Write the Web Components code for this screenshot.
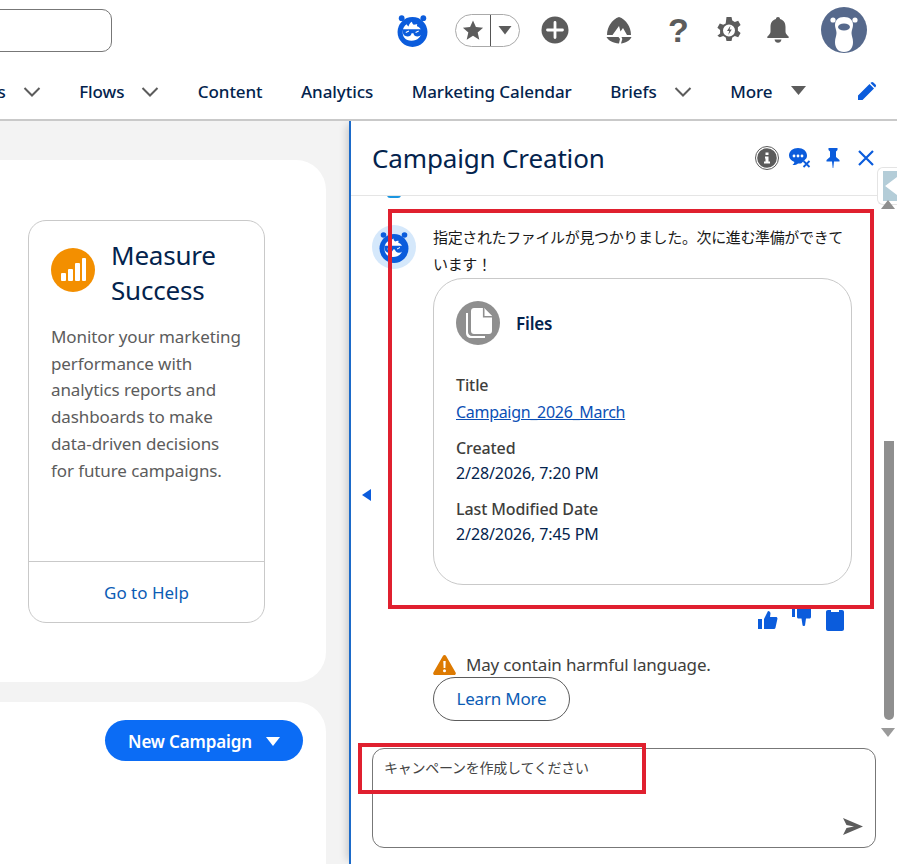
<!DOCTYPE html>
<html lang="en"><head><meta charset="utf-8"><title>Campaign Creation</title>
<style>
html,body{margin:0;padding:0;height:100%;overflow:hidden;background:#fff}
body{font-family:"Noto Sans","Noto Sans CJK JP",sans-serif;color:#03234d}
</style></head><body>
<app-shell>
  <top-bar slot="top"></top-bar>
  <nav-bar slot="top"></nav-bar>
  <home-pane slot="left"></home-pane>
  <campaign-panel slot="right"></campaign-panel>
  <note-box style="left:388px;top:209px;width:486px;height:400px"></note-box>
  <note-box style="left:358px;top:743px;width:288px;height:51px"></note-box>
</app-shell>
<script>
const def=(name,html)=>customElements.define(name,class extends HTMLElement{
  constructor(){super();this.attachShadow({mode:'open'}).innerHTML=html}
});
const BOT=`<svg viewBox="0 0 32 32" width="100%" height="100%" style="display:block"><circle cx="5.500" cy="4" r="2.800" fill="currentColor"/><circle cx="26.500" cy="4" r="2.800" fill="currentColor"/><circle cx="16" cy="17.500" r="14.500" fill="currentColor"/><path d="M6.500 17C6.500 13.500 8.500 11 10.500 10c.3 1 .8 1.600 1.700 2 .3-2 1.500-3.500 3.300-4.500.1 1.300.7 2.400 1.800 3 1-.6 2.300-.8 3.400-.6-.4.700-.5 1.300-.3 1.900 2.300.8 4.100 2.700 4.100 5.200.3 5-3.500 9-9.500 9S6.200 22 6.500 17z" fill="#fff"/><path d="M6.500 14.800h19v2.200c0 3-1.900 4.800-4.600 4.800-2.300 0-3.600-1.200-4-3.200h-1.800c-.4 2-1.700 3.200-4 3.200-2.700 0-4.600-1.800-4.600-4.800z" fill="currentColor"/><path d="M9.500 18l3-1.500M19 18l3-1.500" stroke="#fff" stroke-width="1"/></svg>`;

def('app-shell',`<style>
:host{display:grid;grid-template-columns:349px 548px;grid-template-rows:121px 743px;width:897px;height:864px;overflow:hidden;position:relative}
.top{grid-column:1/3;display:block;background:#fff;position:relative;z-index:2;min-width:0}
</style><div class="top"><slot name="top"></slot></div><slot name="left"></slot><slot name="right"></slot><slot></slot>`);

def('top-bar',`<style>
:host{display:flex;height:60px;box-sizing:border-box;padding:0 30px 0 0;align-items:center;justify-content:flex-end;overflow:hidden;color:#5c5c5c}
:host>*{flex:none}
.search{width:180px;height:43px;box-sizing:border-box;border:1px solid #777;border-radius:10px;margin:0 284px 0 0}
.bot{width:33px;height:35px;color:#0b5cdc;margin-right:26px}
.fav{display:flex;width:65px;height:33px;box-sizing:border-box;border:1px solid #aaa;border-radius:17px;margin-right:21px;align-items:stretch;overflow:hidden}
.fav>span{display:flex;align-items:center;justify-content:center}
.fav .a{width:34px;flex:none;border-right:1px solid #555}
.fav .b{flex:1}
svg{display:block;flex:none}
</style>
<div class="search"></div>
<div class="bot">${BOT}</div>
<div class="fav"><span class="a"><svg width="22" height="22" viewBox="0 0 24 24" fill="#5c5c5c"><path d="M12 1.500l3.200 7.300 7.800.7-5.900 5.200 1.800 7.800L12 18.400l-6.900 4.100 1.800-7.800L1 9.500l7.800-.7z"/></svg></span><span class="b"><svg width="14" height="9" viewBox="0 0 14 9" fill="#5c5c5c"><path d="M.5 0h13L7 8.500z"/></svg></span></div>
<svg style="margin-right:36px" width="28" height="28" viewBox="0 0 28 28"><circle cx="14" cy="14" r="13.500" fill="#5c5c5c"/><path d="M14 6.500v15M6.500 14h15" stroke="#fff" stroke-width="2.800" stroke-linecap="round"/></svg>
<svg style="margin-right:35px" width="28" height="28" viewBox="0 0 28 28" fill="#5c5c5c"><path d="M14 1c3.500 1 6.500 3.500 9 7.500 1.500 2.500 3 6 3 10.500h-4l-4-7-2.500 3.500L14 10 7.500 19H2c0-4.500 1.500-8 3-10.500C7.500 4.500 10.500 2 14 1z"/><path d="M1.500 21h12l1.500 2-1 4.500C8 27 4 25 1.500 21zM16.500 21h10c-2 4-6 6-10.500 6.500l1.300-4.500z"/></svg>
<div style="margin-right:29px;font:700 34px/34px 'Liberation Sans',sans-serif;width:19px;text-align:center">?</div>
<svg style="margin-right:23px" width="26" height="28" viewBox="0 0 26 28" fill="#5c5c5c"><path fill-rule="evenodd" d="M10.500 1h5l.8 3.600 2.500 1.300 3.400-1.200 2.400 4.300-2.700 2.300v3.400l2.700 2.300-2.400 4.300-3.400-1.200-2.500 1.300-.8 3.600h-5l-.8-3.600-2.500-1.300-3.400 1.200L1.400 19.800l2.700-2.300v-3.400L1.400 11.800l2.400-4.300 3.400 1.200 2.500-1.300zM13 8.500a6 6 0 100 12 6 6 0 000-12z"/><path d="M14.500 9.500l-3.500 5.500h2.200l-1 4 3.600-5.500h-2.200z"/></svg>
<svg style="margin-right:30px" width="26" height="26" viewBox="0 0 26 26" fill="#5c5c5c"><path d="M13 0c1.300 0 2 .9 2 1.900C19 3 20.500 6 20.500 10v4.500c0 2 1.300 3.300 3 5 .6.600.5 1.500-.5 1.500H3c-1 0-1.100-.9-.5-1.500 1.700-1.700 3-3 3-5V10C5.500 6 7 3 11 1.900 11 .9 11.700 0 13 0z"/><path d="M9.500 22.500h7c-.3 2-1.700 3.300-3.500 3.300s-3.200-1.300-3.500-3.300z"/></svg>
<svg width="46" height="46" viewBox="0 0 46 46"><circle cx="23" cy="23" r="23" fill="#56698c"/><circle cx="12" cy="13" r="2.600" fill="#fff"/><circle cx="34" cy="13" r="2.600" fill="#fff"/><path d="M23 10c6 0 9 3.500 9 8 0 3-1.500 5-1.500 8 0 3 1.500 5 1.500 9 0 6-3 10-9 10s-9-4-9-10c0-4 1.500-6 1.500-9 0-3-1.500-5-1.500-8 0-4.500 3-8 9-8z" fill="#fff"/><ellipse cx="23" cy="20" rx="6" ry="3.500" fill="#56698c"/></svg>
`);

def('nav-item',`<style>
:host{display:flex;align-items:center;flex:none;font:500 17px/24px "Noto Sans",sans-serif;color:#03234d;white-space:nowrap;letter-spacing:-.08px}
</style><slot></slot>`);

const CHEV=`<svg style="margin-left:17px;display:block;flex:none" width="18" height="10" viewBox="0 0 18 10" fill="none" stroke="#5c5c5c" stroke-width="2"><path d="M1.500 1l7.500 7.500L16.500 1"/></svg>`;
def('nav-bar',`<style>
:host{display:flex;height:61px;box-sizing:border-box;padding:5px 20px 0 0;justify-content:flex-end;align-items:center;gap:38.500px;border-bottom:2px solid #c9c9c9;overflow:hidden;background:#fff}
svg{flex:none}
</style>
<nav-item>s${CHEV}</nav-item>
<nav-item>Flows${CHEV}</nav-item>
<nav-item>Content</nav-item>
<nav-item>Analytics</nav-item>
<nav-item>Marketing Calendar</nav-item>
<nav-item>Briefs${CHEV}</nav-item>
<nav-item>More<svg style="margin:-4px 0 0 18px;display:block;flex:none" width="15" height="9" viewBox="0 0 15 9" fill="#5c5c5c"><path d="M0 0h15L7.500 9z"/></svg></nav-item>
<svg style="margin-top:-2px;margin-left:13px" width="20" height="20" viewBox="0 0 20 20" fill="#0b5cdc"><path d="M1 14.500L12.500 3l4.500 4.500L5.500 19H1zM14 1.500c.8-.8 1.700-.8 2.400 0l2.100 2.100c.7.700.7 1.600 0 2.400l-.5.500-4.500-4.500z"/></svg>
`);

def('help-card',`<style>
:host{display:flex;flex-direction:column;box-sizing:border-box;width:237px;height:403px;border:1px solid #c9c9c9;border-radius:18px;background:#fff}
.head{display:flex;gap:16px;padding:17px 22px 0}
.dot{flex:none;width:44px;height:44px;border-radius:50%;background:#f38f00;display:flex;align-items:center;justify-content:center;margin-top:10px}
h2{margin:0;font:400 26px/35px "Noto Sans",sans-serif;color:#03234d;letter-spacing:-.2px}
p{margin:0;padding:16px 20px 0 22px;flex:1;font:400 17px/26.700px "Noto Sans",sans-serif;color:#5c5c5c;letter-spacing:-.1px}
.foot{border-top:1px solid #c9c9c9;height:61px;display:flex;align-items:center;justify-content:center;font:400 17px/24px "Noto Sans",sans-serif;color:#0b5cb5;box-sizing:border-box;padding-top:2px}
</style>
<div class="head"><div class="dot"><svg width="28" height="28" viewBox="0 0 28 28" fill="#fff"><rect x="2" y="17" width="5" height="8" rx="1"/><rect x="9" y="13" width="5" height="12" rx="1"/><rect x="16" y="7" width="5" height="18" rx="1"/><rect x="23" y="2" width="4" height="23" rx="1"/></svg></div><h2>Measure Success</h2></div>
<p>Monitor your marketing performance with analytics reports and dashboards to make data-driven decisions for future campaigns.</p>
<div class="foot">Go to Help</div>`);

def('home-pane',`<style>
:host{display:flex;flex-direction:column;gap:20px;background:#f3f3f3;padding:39px 23px 0 0;min-width:0;overflow:hidden}
.c{background:#fff;border-radius:0 30px 30px 0;box-sizing:border-box}
.one{height:522px;padding:60px 0 0 28px}
.two{flex:1;border-radius:0 30px 0 0;display:flex;justify-content:flex-end;padding:18px 23px 0 0}
.btn{height:41px;width:198px;background:#0b6cf5;color:#fff;border-radius:21px;font:600 17px/41px "Noto Sans",sans-serif;display:flex;align-items:center;justify-content:center;gap:14px;letter-spacing:-.15px;padding-top:1px;box-sizing:border-box}
</style>
<div class="c one"><help-card></help-card></div>
<div class="c two"><div class="btn">New Campaign<svg width="14" height="9" viewBox="0 0 14 9" fill="#fff"><path d="M0 0h14L7 9z"/></svg></div></div>`);

def('file-field',`<style>
:host{display:block;font:400 16px/25px "Noto Sans",sans-serif;color:#03234d;letter-spacing:-.1px}
:host([spaced]) .l{margin-bottom:2px}
.l{font-weight:500;color:#3e3e3c}
</style><div class="l"><slot name="label"></slot></div><div><slot></slot></div>`);

def('files-card',`<style>
:host{display:block;box-sizing:border-box;width:419px;height:307px;border:1px solid #c9c9c9;border-radius:30px;background:#fff;padding:22px 22px 0}
.h{display:flex;align-items:center;gap:16px;margin-bottom:28px}
.i{width:44px;height:44px;border-radius:50%;background:#8f8f8f;display:flex;align-items:center;justify-content:center}
.t{font:600 17px/24px "Noto Sans",sans-serif;color:#03234d;letter-spacing:-.15px;padding-top:2px}
.f{display:flex;flex-direction:column;gap:11px}
a{color:#0b4fb5;text-decoration:underline;letter-spacing:-.3px}
</style>
<div class="h"><div class="i"><svg width="30" height="32" viewBox="0 0 30 32" fill="#fff"><path d="M11 1h10l8 8v15c0 1.700-1.300 3-3 3H11c-1.700 0-3-1.300-3-3V4c0-1.700 1.300-3 3-3z"/><path d="M20.500 1v9h9" fill="#8f8f8f" stroke="#8f8f8f" stroke-width="1.200"/><path d="M21.500 1.500v7.500H29z"/><path d="M5 6v19c0 2.200 1.800 4 4 4h13v2H8c-3 0-5-2-5-5V6z"/></svg></div><div class="t">Files</div></div>
<div class="f">
<file-field spaced><span slot="label">Title</span><a href="#">Campaign_2026_March</a></file-field>
<file-field><span slot="label">Created</span>2/28/2026, 7:20 PM</file-field>
<file-field><span slot="label">Last Modified Date</span>2/28/2026, 7:45 PM</file-field>
</div>`);

def('chat-thread',`<style>
:host{display:block;flex:1;min-height:0;position:relative;overflow:hidden;padding:0;font-family:"Noto Sans","Noto Sans CJK JP",sans-serif}
.msg{display:grid;grid-template-columns:44px 1fr;column-gap:17px;padding:29px 0 0 21px}
.av{width:44px;height:44px;border-radius:50%;background:#d5e8fb;color:#0b5cdc;padding:6px;box-sizing:border-box}
.body{width:419px}
.txt{font:400 15px/27px "Noto Sans CJK JP","Noto Sans",sans-serif;color:#1a1a1a;margin:-2px 0 1px;width:415px;letter-spacing:-.36px}
.acts{display:flex;gap:12px;justify-content:flex-end;margin:24px 0 0;width:412px;height:24px;align-items:flex-start;color:#0b5cdc}
.warn{display:flex;align-items:center;gap:10px;margin:20px 0 0 0;font:400 17px/24px "Noto Sans",sans-serif;color:#3e3e3c;letter-spacing:-.17px}
.lm{display:inline-flex;align-items:center;justify-content:center;width:137px;height:44px;box-sizing:border-box;border:1px solid #5c5c5c;border-radius:22px;font:400 17px/24px "Noto Sans",sans-serif;color:#0b5cb5;letter-spacing:-.2px}
.peek{height:3px;width:14px;background:#1b96e0;border-radius:0 0 8px 8px;position:absolute;left:36px;top:-1px}
</style>
<div class="peek"></div>
<div class="msg">
 <div class="av">${BOT}</div>
 <div class="body">
  <div class="txt">指定されたファイルが見つかりました。次に進む準備ができています！</div>
  <files-card></files-card>
  <div class="acts">
   <svg width="22" height="22" viewBox="0 0 22 22" fill="currentColor"><path d="M1 10h4v10H1zM7 10l4-8c1.500 0 2.500 1 2.500 2.500L13 8h6c1 0 1.700 1 1.400 2l-2 9c-.2.600-.7 1-1.400 1H7z"/></svg>
   <svg width="22" height="22" viewBox="0 0 22 22" fill="currentColor" style="margin-top:-3px"><path d="M1 2h3v9H1zM6 2h14v9c0 .8-.7 1.500-1.500 1.500H15l-1 7c0 .7-2.500.7-2.500-.5l-1-6.500H7.500c-.8 0-1.500-.7-1.500-1.500z"/></svg>
   <svg width="20" height="26" viewBox="0 0 20 26" fill="currentColor" style="margin-top:-3px"><path d="M3 4h3v2h8V4h3c1.100 0 2 .9 2 2v17c0 1.100-.9 2-2 2H3c-1.100 0-2-.9-2-2V6c0-1.100.9-2 2-2z"/></svg>
  </div>
  <div class="warn"><svg width="23" height="20" viewBox="0 0 23 20"><path d="M11.500 0c.7 0 1.200.3 1.600 1l9.500 16.500c.6 1.100 0 2.500-1.400 2.500H1.800C.4 20-.2 18.600.4 17.500L9.900 1c.4-.7.900-1 1.600-1z" fill="#dd7a01"/><path d="M10.300 6h2.400l-.3 7h-1.800z M11.500 14.300a1.500 1.500 0 110 3 1.500 1.500 0 010-3z" fill="#fff"/></svg><span>May contain harmful language.</span></div>
  <div class="lm">Learn More</div>
 </div>
</div>`);

def('chat-input',`<style>
:host{display:block;box-sizing:border-box;width:504px;height:100px;margin:0 0 16px 21px;border:1px solid #777;border-radius:12px;position:relative;background:#fff;flex:none}
.ph{padding:6px 0 0 11px;font:400 14px/24px "Noto Sans CJK JP",sans-serif;color:#444;letter-spacing:-.25px}
svg{position:absolute;right:12px;bottom:12px}
</style><div class="ph">キャンペーンを作成してください</div>
<svg width="20" height="17" viewBox="0 0 20 17" fill="#5c5c5c"><path d="M0 0l20 8.500L0 17l3.500-7L11 8.500 3.500 7z"/></svg>`);

def('campaign-panel',`<style>
:host{display:flex;flex-direction:column;box-sizing:border-box;border-left:2px solid #1b6ac9;background:#fff;position:relative;box-shadow:-6px 0 8px -4px rgba(0,0,0,.18);z-index:1;min-height:0;height:743px}
header{display:flex;align-items:center;height:75px;flex:none;box-sizing:border-box;border-bottom:1px solid #e5e5e5;padding:0 15px 0 21px}
h1{margin:0;flex:1;font:400 26px/36px "Noto Sans",sans-serif;color:#03234d;letter-spacing:-.15px}
.ics{display:flex;align-items:center}
.ics span{display:flex;justify-content:center;width:33px}
.ics svg{display:block;flex:none}
.side{position:absolute;left:11px;top:368px;width:0;height:0;border:6px solid transparent;border-left-width:0;border-right:9px solid #0b5cdc}
.tab{position:absolute;right:0;top:46px;width:20px;height:38px;background:#fff;border:1px solid #e4e4e4;border-right:0;border-radius:6px 0 0 6px;box-sizing:border-box;padding:3px 0 3px 5px}
.tab div{height:100%;background:#b4cdd8;clip-path:polygon(0 0,100% 0,100% 20%,15% 50%,100% 80%,100% 100%,0 100%)}
.up{position:absolute;right:2px;top:79px;width:0;height:0;border:7px solid transparent;border-top:0;border-bottom:9px solid #8f8f8f}
.thumb{position:absolute;right:3px;top:320px;width:10px;height:279px;background:#8f8f8f;border-radius:0 0 5px 5px}
.down{position:absolute;right:2px;top:607px;width:0;height:0;border:7px solid transparent;border-bottom:0;border-top:9px solid #9a9a9a}
</style>
<header><h1>Campaign Creation</h1><div class="ics">
<span><svg width="24" height="24" viewBox="0 0 24 24"><circle cx="12" cy="12" r="11.500" fill="none" stroke="#5c5c5c" stroke-width="1"/><circle cx="12" cy="12" r="9.800" fill="#5c5c5c"/><path d="M10.500 6.500h3v2.500h-3zM10 10.500h3.500v5H15v2H9v-2h1.500v-3H10z" fill="#fff"/></svg></span>
<span><svg width="24" height="22" viewBox="0 0 24 22"><path d="M10 1c5 0 9 3 9 7.500 0 1-.2 2-.6 2.800l-5 5c-1 .3-2.200.4-3.400.2-1.500 1.200-3.500 1.800-5.500 1.500 1-.8 1.700-1.800 1.900-3C3 13.500 1 11.200 1 8.500 1 4 5 1 10 1z" fill="#0b5cdc"/><circle cx="6" cy="9" r="1.400" fill="#fff"/><circle cx="10" cy="9" r="1.400" fill="#fff"/><circle cx="14" cy="9" r="1.400" fill="#fff"/><path d="M15.500 14l6 6M21.500 14l-6 6" stroke="#0b5cdc" stroke-width="1.800"/></svg></span>
<span><svg width="18" height="20" viewBox="0 0 18 20" fill="#0b5cdc"><path d="M4.500 0h9v2l-1.500 1.500V9l3.500 3v1.500H10l-.7 6.500h-.6L8 13.500H2.500V12L6 9V3.500L4.500 2z"/></svg></span>
<span><svg width="16" height="16" viewBox="0 0 16 16" fill="none" stroke="#0b5cdc" stroke-width="2.200"><path d="M1 1l14 14M15 1L1 15"/></svg></span>
</div></header>
<chat-thread></chat-thread>
<chat-input></chat-input>
<div class="side"></div>
<div class="tab"><div></div></div><div class="up"></div><div class="thumb"></div><div class="down"></div>
`);
def('note-box',`<style>:host{display:block;position:absolute;box-sizing:border-box;border:4px solid #e0202f;z-index:5;pointer-events:none}</style>`);
</script>
</body></html>
